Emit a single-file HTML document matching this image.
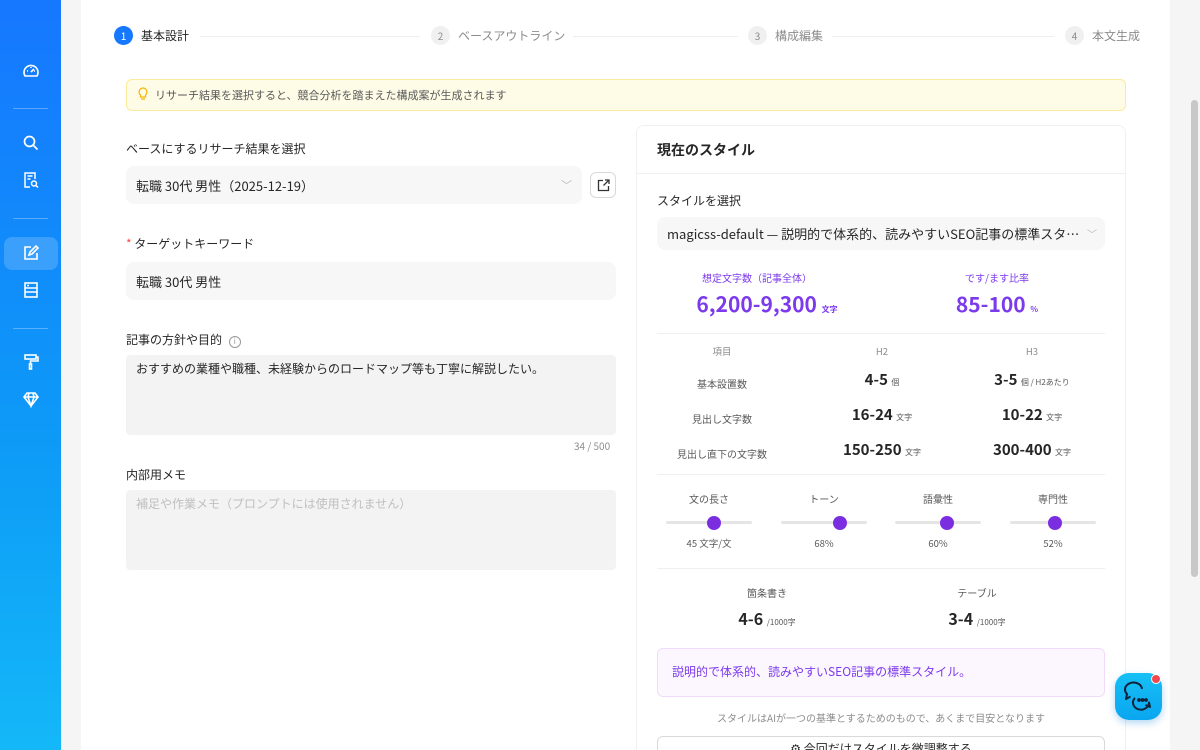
<!DOCTYPE html>
<html><head><meta charset="utf-8"><style>
*{box-sizing:border-box;margin:0;padding:0}
html{width:1200px;height:750px;overflow:hidden}
body{width:1200px;height:750px;overflow:hidden;background:#f5f5f5;font-family:"Noto Sans CJK JP","Liberation Sans",sans-serif;color:#262626;position:relative}
.side{position:absolute;left:0;top:0;width:61px;height:750px;background:linear-gradient(180deg,#1677ff 0%,#0d9bf7 60%,#14b8f8 100%)}
.side .ic{position:absolute;left:22px;width:18px;height:18px}
.side .sep{position:absolute;left:13px;width:35px;height:1px;background:rgba(255,255,255,.3)}
.main{position:absolute;left:81px;top:0;width:1089px;height:750px;background:#fff}
.abs{position:absolute}
.step{position:absolute;top:26px;display:flex;align-items:center;font-size:12px;color:#8c8c8c;white-space:nowrap}
.num{width:19px;height:19px;border-radius:50%;background:#f0f0f0;color:#8c8c8c;font-size:10px;display:flex;align-items:center;justify-content:center;margin-right:8px}
.line{position:absolute;top:36px;height:1px;background:#eee}
.label{position:absolute;font-size:12px;color:#262626}
.inp{position:absolute;background:#f7f7f7;border-radius:8px;font-size:13px;color:#262626;padding-left:10px;display:flex;align-items:center;white-space:nowrap}
.card{position:absolute;left:636px;top:125px;width:490px;height:625px;border:1px solid #f0f0f0;border-bottom:none;border-radius:8px 8px 0 0;background:#fff;overflow:hidden}
.c{text-align:center;position:absolute;white-space:nowrap}
.pur{color:#7c3aed}
.g{color:#595959}
.hr{position:absolute;left:20px;width:448px;height:1px;background:#f0f0f0}
.track{position:absolute;width:86px;height:3px;background:#e5e5e5;border-radius:2px}
.dot{position:absolute;width:14px;height:14px;border-radius:50%;background:#7b2ee0;top:-5px}
.sm{font-size:8px;color:#595959;font-weight:normal}
</style></head><body>
<div class="side">
<svg class="ic" style="top:62px" viewBox="0 0 18 18" fill="none" stroke="#fff" stroke-width="1.6"><path d="M3 14a7 7 0 1 1 12 0z"/><path d="M9 10l3-3"/><path d="M5 9h1M9 5v1M13 9h-1"/></svg>
<div class="sep" style="top:108px"></div>
<svg class="ic" style="top:134px" viewBox="0 0 18 18" fill="none" stroke="#fff" stroke-width="1.7"><circle cx="7.5" cy="7.5" r="5"/><path d="M11.5 11.5l4 4"/></svg>
<svg class="ic" style="top:171px" viewBox="0 0 18 18" fill="none" stroke="#fff" stroke-width="1.5"><path d="M8 16H3V2h10v6"/><path d="M5.5 5h5M5.5 8h3"/><circle cx="12" cy="12.5" r="2.5"/><path d="M14 14.5l2 2"/></svg>
<div class="sep" style="top:218px"></div>
<div class="abs" style="left:4px;top:237px;width:54px;height:33px;border-radius:8px;background:rgba(255,255,255,.18)"></div>
<svg class="ic" style="top:244px" viewBox="0 0 18 18" fill="none" stroke="#fff" stroke-width="1.6"><path d="M9 3H3v12h12V9"/><path d="M7 11l1-3 6-6 2 2-6 6z"/></svg>
<svg class="ic" style="top:281px" viewBox="0 0 18 18" fill="none" stroke="#fff" stroke-width="1.6"><rect x="3" y="2" width="12" height="14"/><path d="M3 7h12M3 11h12M5 4.5h2"/></svg>
<div class="sep" style="top:328px"></div>
<svg class="ic" style="top:353px" viewBox="0 0 18 18" fill="none" stroke="#fff" stroke-width="1.6"><rect x="3" y="2" width="11" height="4"/><path d="M14 4h2v4H8.5v3"/><rect x="7.5" y="11" width="2" height="5"/></svg>
<svg class="ic" style="top:390px" viewBox="0 0 18 18" fill="none" stroke="#fff" stroke-width="1.6"><path d="M5 3h8l3 4-7 9-7-9z"/><path d="M2 7h14M7 3L6 7l3 9 3-9-1-4"/></svg>
</div>
<div class="abs" style="left:1188px;top:0;width:12px;height:750px;background:#f5f5f5"></div>
<div class="abs" style="left:1191px;top:100px;width:7px;height:477px;background:#c8c8c8;border-radius:4px"></div>
<div class="main"></div>

<div class="step" style="left:114px;color:#262626"><span class="num" style="background:#1677ff;color:#fff">1</span>基本設計</div>
<div class="line" style="left:200px;width:220px"></div>
<div class="step" style="left:431px"><span class="num">2</span>ベースアウトライン</div>
<div class="line" style="left:573px;width:165px"></div>
<div class="step" style="left:748px"><span class="num">3</span>構成編集</div>
<div class="line" style="left:832px;width:222px"></div>
<div class="step" style="left:1065px"><span class="num">4</span>本文生成</div>

<div class="abs" style="left:126px;top:79px;width:1000px;height:32px;background:#fefbe6;border:1px solid #fbeb9a;border-radius:6px;font-size:11px;color:#595959;padding:7px 0 0 28px;white-space:nowrap">リサーチ結果を選択すると、競合分析を踏まえた構成案が生成されます
<svg class="abs" style="left:10px;top:7px" width="12" height="14" viewBox="0 0 12 14" fill="none" stroke="#f5b700" stroke-width="1.2"><path d="M6 1a4 4 0 0 0-2.5 7v2h5V8A4 4 0 0 0 6 1zM4 12h4"/></svg></div>

<div class="label" style="left:126px;top:140px">ベースにするリサーチ結果を選択</div>
<div class="inp" style="left:126px;top:166px;width:456px;height:38px">転職 30代 男性（2025-12-19）<span class="abs" style="right:10px;color:#bbb;font-size:11px">﹀</span></div>
<div class="abs" style="left:590px;top:172px;width:26px;height:26px;border:1px solid #d9d9d9;border-radius:6px"><svg style="position:absolute;left:6px;top:6px" width="13" height="13" viewBox="0 0 13 13" fill="none" stroke="#333" stroke-width="1.3"><path d="M6 1.5H1.5v10h10V7M8 1h4v4M12 1L6.5 6.5"/></svg></div>

<div class="label" style="left:126px;top:235px"><span style="color:#ff4d4f">* </span>ターゲットキーワード</div>
<div class="inp" style="left:126px;top:262px;width:490px;height:38px">転職 30代 男性</div>

<div class="label" style="left:126px;top:331px">記事の方針や目的 <span style="display:inline-block;width:12px;height:12px;border:1px solid #999;border-radius:50%;font-size:8px;text-align:center;line-height:10px;color:#999;margin-left:4px">i</span></div>
<div class="abs" style="left:126px;top:355px;width:490px;height:80px;background:#f3f3f3;border-radius:4px;font-size:12px;padding:5px 10px;white-space:nowrap">おすすめの業種や職種、未経験からのロードマップ等も丁寧に解説したい。</div>
<div class="abs" style="left:574px;top:438px;font-size:10px;color:#8c8c8c">34 / 500</div>

<div class="label" style="left:126px;top:466px">内部用メモ</div>
<div class="abs" style="left:126px;top:490px;width:490px;height:80px;background:#f3f3f3;border-radius:4px;font-size:12px;padding:5px 10px;color:#bfbfbf">補足や作業メモ（プロンプトには使用されません）</div>

<div class="card">
<div class="abs" style="left:20px;top:14px;font-size:14px;font-weight:bold">現在のスタイル</div>
<div class="abs" style="left:0;top:47px;width:488px;height:1px;background:#f0f0f0"></div>
<div class="abs" style="left:20px;top:66px;font-size:12px">スタイルを選択</div>
<div class="inp" style="left:20px;top:91px;width:448px;height:33px;font-size:13px">magicss-default — 説明的で体系的、読みやすいSEO記事の標準スタ…<span class="abs" style="right:8px;color:#bbb;font-size:10px">﹀</span></div>
<div class="c pur" style="left:30px;width:180px;top:144px;font-size:10px">想定文字数（記事全体）</div>
<div class="c pur" style="left:30px;width:200px;top:163px;font-size:21px;font-weight:bold">6,200-9,300 <span style="font-size:8px">文字</span></div>
<div class="c pur" style="left:270px;width:180px;top:144px;font-size:10px">です/ます比率</div>
<div class="c pur" style="left:270px;width:180px;top:163px;font-size:21px;font-weight:bold">85-100 <span style="font-size:8px">%</span></div>
<div class="hr" style="top:207px"></div>
<div class="c" style="left:20px;width:130px;top:218px;font-size:9.5px;color:#8c8c8c">項目</div>
<div class="c" style="left:160px;width:170px;top:218px;font-size:9.5px;color:#8c8c8c">H2</div>
<div class="c" style="left:310px;width:170px;top:218px;font-size:9.5px;color:#8c8c8c">H3</div>
<div class="c g" style="left:20px;width:130px;top:250px;font-size:10px">基本設置数</div>
<div class="c" style="left:160px;width:170px;top:243px;font-size:15px;font-weight:bold">4-5 <span class="sm">個</span></div>
<div class="c" style="left:310px;width:170px;top:243px;font-size:15px;font-weight:bold">3-5 <span class="sm">個 / H2あたり</span></div>
<div class="c g" style="left:20px;width:130px;top:285px;font-size:10px">見出し文字数</div>
<div class="c" style="left:160px;width:170px;top:278px;font-size:15px;font-weight:bold">16-24 <span class="sm">文字</span></div>
<div class="c" style="left:310px;width:170px;top:278px;font-size:15px;font-weight:bold">10-22 <span class="sm">文字</span></div>
<div class="c g" style="left:20px;width:130px;top:320px;font-size:10px">見出し直下の文字数</div>
<div class="c" style="left:160px;width:170px;top:313px;font-size:15px;font-weight:bold">150-250 <span class="sm">文字</span></div>
<div class="c" style="left:310px;width:170px;top:313px;font-size:15px;font-weight:bold">300-400 <span class="sm">文字</span></div>
<div class="hr" style="top:348px"></div>

<div class="c g" style="left:29px;width:86px;top:365px;font-size:10px">文の長さ</div>
<div class="track" style="left:29px;top:395px"><div class="dot" style="left:41px"></div></div>
<div class="c g" style="left:29px;width:86px;top:410px;font-size:9.5px">45 文字/文</div>
<div class="c g" style="left:144px;width:86px;top:365px;font-size:10px">トーン</div>
<div class="track" style="left:144px;top:395px"><div class="dot" style="left:52px"></div></div>
<div class="c g" style="left:144px;width:86px;top:410px;font-size:9.5px">68%</div>
<div class="c g" style="left:258px;width:86px;top:365px;font-size:10px">語彙性</div>
<div class="track" style="left:258px;top:395px"><div class="dot" style="left:45px"></div></div>
<div class="c g" style="left:258px;width:86px;top:410px;font-size:9.5px">60%</div>
<div class="c g" style="left:373px;width:86px;top:365px;font-size:10px">専門性</div>
<div class="track" style="left:373px;top:395px"><div class="dot" style="left:38px"></div></div>
<div class="c g" style="left:373px;width:86px;top:410px;font-size:9.5px">52%</div>
<div class="hr" style="top:442px"></div>
<div class="c g" style="left:40px;width:180px;top:459px;font-size:10px">箇条書き</div>
<div class="c" style="left:40px;width:180px;top:480px;font-size:16px;font-weight:bold">4-6 <span class="sm">/1000字</span></div>
<div class="c g" style="left:250px;width:180px;top:459px;font-size:10px">テーブル</div>
<div class="c" style="left:250px;width:180px;top:480px;font-size:16px;font-weight:bold">3-4 <span class="sm">/1000字</span></div>
<div class="abs" style="left:20px;top:522px;width:448px;height:49px;background:#fcf6ff;border:1px solid #f0dcfa;border-radius:6px;font-size:12px;color:#7c3aed;padding:14px 0 0 14px">説明的で体系的、読みやすいSEO記事の標準スタイル。</div>
<div class="c" style="left:0;width:488px;top:584px;font-size:10px;color:#8c8c8c">スタイルはAIが一つの基準とするためのもので、あくまで目安となります</div>
<div class="abs" style="left:20px;top:610px;width:448px;height:34px;border:1px solid #d9d9d9;border-radius:6px;font-size:12px;text-align:center;padding-top:3px">⚙ 今回だけスタイルを微調整する</div>
</div>

<div class="abs" style="left:1115px;top:673px;width:47px;height:47px;border-radius:14px;background:linear-gradient(180deg,#16c0f5,#0aa6f0);box-shadow:0 3px 8px rgba(0,120,220,.3)">
<svg style="position:absolute;left:8px;top:8px" width="31" height="31" viewBox="0 0 31 31" fill="none" stroke="#10233a" stroke-width="2" stroke-linejoin="round"><path d="M19 8a8.5 7 0 1 0-15 5l-1 5 4.5-2.5"/><path d="M12 17a8 7 0 1 0 14 4.5l1 4.5-4.5-2"/><circle cx="16" cy="19" r=".9" fill="#10233a"/><circle cx="19.5" cy="19" r=".9" fill="#10233a"/><circle cx="23" cy="19" r=".9" fill="#10233a"/></svg>
<div class="abs" style="left:36px;top:1px;width:10px;height:10px;border-radius:50%;background:#f0484e;border:1px solid #fff"></div>
</div>
</body></html>
